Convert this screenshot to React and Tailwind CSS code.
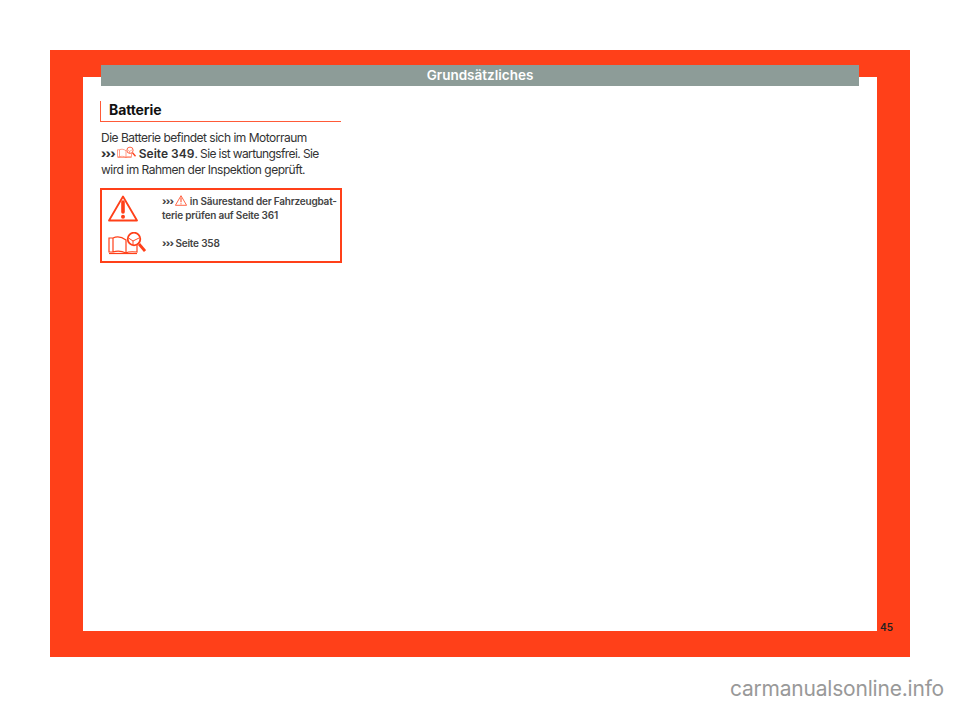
const Chevrons = () => <span className="font-extrabold tracking-[-0.8px]">›››</span>;

const BookIcon = ({ className, stroke = 1.2 }) => (
  <svg viewBox="0 0 38 23" className={className} fill="none" stroke="#ff4019" strokeWidth={stroke}>
    <path d="M1 6 H5 V20 H1 Z M5 6 C9 4 14 5 18 8 V21 C14 19 9 18.500 5 20 M18 21 C20 19.500 24 19.500 29 20 V13" />
    <path d="M1 21.500 H29" />
    <circle cx="26" cy="7" r="6.300" strokeWidth={stroke + 0.6} />
    <path d="M20.500 6 L25 9 L31 6 M25 9 V13" strokeWidth={stroke * 0.8} />
    <path d="M31 12 L37 19" strokeWidth={stroke + 1.6} />
  </svg>
);

const WarnIcon = ({ className, stroke = 1.8, small = false }) => (
  <svg viewBox="0 0 30 27" className={className} fill="none" stroke="#ff4019" strokeWidth={stroke}>
    <path d="M15 1.500 L29 25.500 H1 Z" strokeLinejoin="round" />
    <path d="M15 7 L15 17" strokeWidth={small ? 2.5 : 3.6} strokeLinecap="round" />
    <circle cx="15" cy="21.700" r={small ? 1.5 : 2} fill="#ff4019" stroke="none" />
  </svg>
);

export default function App() {
  return (
    <div className="w-[960px] h-[708px] bg-white relative overflow-hidden font-['Inter','Liberation_Sans',sans-serif]">
      <div className="absolute left-[50px] top-[50px] w-[860px] h-[607px] bg-[#ff4019] pt-[27px] px-[33px]">
        <div className="w-[794px] h-[554px] bg-white pt-[24px] pl-[17px]">
          <div className="w-[242px]">
            <div className="border-l border-b border-[#ff5a38] h-[21px] w-[241px] pl-[8px] text-[14px] leading-[17px] font-bold text-[#111] tracking-[-0.1px]">
              Batterie
            </div>
            <p className="mt-[8px] ml-[1px] text-[12px] leading-[16px] text-[#333] w-[241px] tracking-[-0.5px] whitespace-nowrap">
              Die Batterie befindet sich im Motorraum
              <br />
              <Chevrons />
              <BookIcon className="inline w-[19px] h-[13px] align-[-1px] ml-[2px] mr-[3px]" stroke={1} />
              <span className="font-semibold tracking-[0px]">Seite 349</span>
              <span className="tracking-[-0.6px]">. Sie ist wartungsfrei. Sie</span>
              <br />
              wird im Rahmen der Inspektion geprüft.
            </p>
            <div className="mt-[10px] w-[242px] h-[75px] border-2 border-[#ff4019] flex">
              <div className="w-[60px] shrink-0 flex flex-col items-start pl-[6px] pt-[5px] gap-[10px]">
                <WarnIcon className="w-[30px] h-[27px]" />
                <BookIcon className="w-[38px] h-[23px]" />
              </div>
              <div className="text-[10px] leading-[14px] font-semibold text-[#444] pt-[4px] tracking-[-0.2px] whitespace-nowrap">
                <div>
                  <Chevrons /> <WarnIcon className="inline w-[12px] h-[11px] align-[-1px]" stroke={2} small /> in Säurestand der Fahrzeugbat-
                  <br />
                  terie prüfen auf Seite 361
                </div>
                <div className="mt-[14px]">
                  <Chevrons /> Seite 358
                </div>
              </div>
            </div>
          </div>
        </div>
        <div className="absolute left-[830px] top-[570px] text-[10px] leading-[14px] font-semibold text-[#222]">45</div>
      </div>
      <div className="absolute left-[101px] top-[65px] w-[758px] h-[21px] bg-[#8d9c98] text-white text-center text-[13.500px] leading-[21px] font-semibold">
        Grundsätzliches
      </div>
      <div className="absolute right-[16px] bottom-[4px] text-[21px] leading-[30px] text-[#999] tracking-[-0.2px]">carmanualsonline.info</div>
    </div>
  );
}
